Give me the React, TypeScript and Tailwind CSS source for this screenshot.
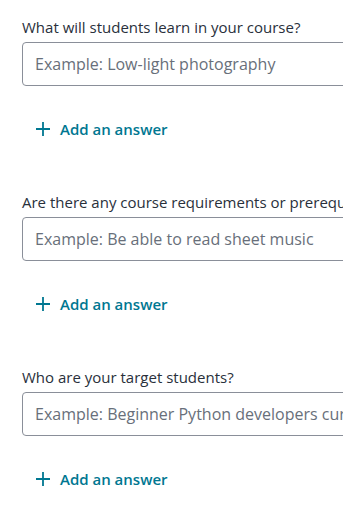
import React from 'react';

// Questions du formulaire
interface Question {
  label: string;
  placeholder: string;
}

const questions: Question[] = [
  { label: 'What will students learn in your course?', placeholder: 'Example: Low-light photography' },
  {
    label: 'Are there any course requirements or prerequisites?',
    placeholder: 'Example: Be able to read sheet music',
  },
  {
    label: 'Who are your target students?',
    placeholder: 'Example: Beginner Python developers curious about data science',
  },
];

const PlusIcon: React.FC = () => (
  <svg width="16" height="16" viewBox="0 0 16 16" fill="none" stroke="currentColor" strokeWidth="1.8">
    <path d="M8 1v14M1 8h14" />
  </svg>
);

const App: React.FC = () => {
  return (
    <div className="w-[343px] h-[507px] overflow-hidden bg-white font-['Open_Sans',sans-serif]">
      <div className="w-[640px] pl-[22px] pt-[17px]">
        {questions.map((q) => (
          <div key={q.label} className="mb-[43px]">
            <label className="block whitespace-nowrap text-[15px] leading-[20px] text-[#29303b]">{q.label}</label>
            <input
              type="text"
              placeholder={q.placeholder}
              className="mt-[5px] block h-[44px] w-full rounded-[4px] border border-[#8a8f99] px-[12px] text-[16px] text-[#29303b] placeholder:text-[#686f7a] outline-none"
            />
            <button className="mt-[23px] flex h-10 items-center gap-[9px] pl-[13px] text-[15px] font-semibold text-[#007791]">
              <PlusIcon />
              <span>Add an answer</span>
            </button>
          </div>
        ))}
      </div>
    </div>
  );
};

export default App;
